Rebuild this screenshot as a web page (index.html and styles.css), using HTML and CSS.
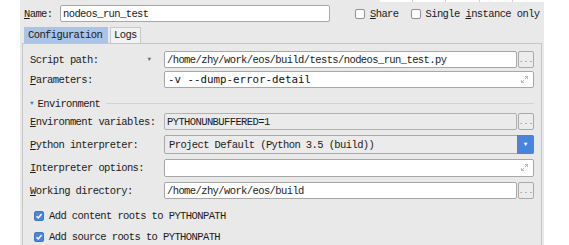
FILE: index.html
```html
<!DOCTYPE html>
<html lang="en">

<head>
	<meta charset="UTF-8">
	<title>Run Configuration</title>
	<link rel="stylesheet" href="styles.css">
</head>

<body>
	<div class="dialog">
		<div class="top-strip">
			<span></span><span></span><span></span><span></span><span></span>
		</div>

		<div class="name-row">
			<label class="name-label"><u>N</u>ame:</label>
			<div class="field name-field">nodeos_run_test</div>
			<label class="check share"><span class="box"></span><span><u>S</u>hare</span></label>
			<label class="check"><span class="box"></span><span>Single <u>i</u>nstance only</span></label>
		</div>

		<div class="tabs">
			<div class="tab active">Configuration</div>
			<div class="tab">Logs</div>
		</div>

		<div class="panel">
			<div class="row row-script">
				<div class="label"><span>Script path:</span><span class="drop">&#9660;</span></div>
				<div class="field">/home/zhy/work/eos/build/tests/nodeos_run_test.py</div>
				<div class="dots">...</div>
			</div>

			<div class="row row-params">
				<div class="label"><span><u>P</u>arameters:</span></div>
				<div class="field wide params">-v --dump-error-detail
					<svg class="expand" width="7" height="7" viewBox="0 0 7 7"><path d="M4 0.5h2.5v2.5M6.5 0.5L4 3M0.5 4v2.5h2.5M0.5 6.5L3 4" fill="none" stroke="#b8b8b8" stroke-width="1"/></svg>
				</div>
			</div>

			<div class="section">
				<span class="tri">&#9660;</span><span>Environment</span><span class="rule"></span>
			</div>

			<div class="row row-env">
				<div class="label"><span><u>E</u>nvironment variables:</span></div>
				<div class="field muted">PYTHONUNBUFFERED=1</div>
				<div class="dots">...</div>
			</div>

			<div class="row row-python">
				<div class="label"><span><u>P</u>ython interpreter:</span></div>
				<div class="field wide combo">Project Default (Python 3.5 (build))
					<span class="combo-btn">&#9660;</span>
				</div>
			</div>

			<div class="row row-options">
				<div class="label"><span><u>I</u>nterpreter options:</span></div>
				<div class="field wide">
					<svg class="expand" width="7" height="7" viewBox="0 0 7 7"><path d="M4 0.5h2.5v2.5M6.5 0.5L4 3M0.5 4v2.5h2.5M0.5 6.5L3 4" fill="none" stroke="#b8b8b8" stroke-width="1"/></svg>
				</div>
			</div>

			<div class="row row-work">
				<div class="label"><span><u>W</u>orking directory:</span></div>
				<div class="field">/home/zhy/work/eos/build</div>
				<div class="dots">...</div>
			</div>

			<label class="check checked first"><span class="box"><svg width="8" height="8" viewBox="0 0 8 8"><path d="M1.5 4.2l1.8 1.8 3.3-4" fill="none" stroke="#fff" stroke-width="1.5"/></svg></span><span>Add content roots to PYTHONPATH</span></label>
			<label class="check checked second"><span class="box"><svg width="8" height="8" viewBox="0 0 8 8"><path d="M1.5 4.2l1.8 1.8 3.3-4" fill="none" stroke="#fff" stroke-width="1.5"/></svg></span><span>Add source roots to PYTHONPATH</span></label>
		</div>
	</div>
</body>

</html>
```

FILE: styles.css
```css
*,
*::before,
*::after {
	box-sizing: border-box;
}

body {
	margin: 0;
	background-color: #ffffff;
	font-family: "Liberation Mono", "DejaVu Sans Mono", monospace;
	font-size: 10.5px;
	letter-spacing: -0.6px;
	color: #1b1b1b;
}

u {
	text-decoration: underline;
	text-underline-offset: 1px;
}

.dialog {
	position: relative;
	margin-left: 20px;
	width: 524px;
	height: 245px;
	background-color: #e9e9e9;
	overflow: hidden;
}

.top-strip {
	position: absolute;
	top: 0;
	left: 360px;
	width: 166px;
	height: 2px;
	display: flex;
	background-color: #ffffff;
}

.top-strip span {
	flex: 1;
	border-right: 1px solid #cfcfcf;
}

.name-row {
	display: flex;
	align-items: center;
	height: 24px;
	padding-top: 3px;
}

.name-label {
	width: 40px;
	flex: none;
	padding-left: 4px;
}

.check {
	display: flex;
	align-items: center;
	gap: 5px;
	white-space: nowrap;
}

.share {
	margin-left: 25px;
	margin-right: 12px;
}

.box {
	width: 10px;
	height: 10px;
	flex: none;
	border: 1px solid #8f8f8f;
	border-radius: 2px;
	background-color: #ffffff;
	display: flex;
	align-items: center;
	justify-content: center;
}

.tabs {
	display: flex;
	gap: 2px;
	margin-top: 3px;
	padding-left: 4px;
	height: 16px;
}

.tab {
	padding: 0 3px;
	line-height: 15px;
	border: 1px solid #c8c8c8;
	border-bottom: none;
	background-color: #f2f2f2;
}

.tab.active {
	width: 84px;
	background-color: #a9c4e6;
	border-color: #a9c4e6;
}

.panel {
	margin-left: 2px;
	width: 520px;
	height: 210px;
	border: 1px solid #c6c6c6;
	padding: 7px 7px 0 7px;
	display: flex;
	flex-direction: column;
}

.row {
	display: flex;
	align-items: stretch;
	height: 17px;
}

.label {
	width: 134px;
	flex: none;
	display: flex;
	align-items: center;
}

.drop {
	margin-left: auto;
	margin-right: 13px;
	font-size: 6px;
	color: #6c6c6c;
	letter-spacing: 0;
}

.field {
	position: relative;
	width: 353px;
	flex: none;
	display: flex;
	align-items: center;
	padding-left: 2px;
	background-color: #ffffff;
	border: 1px solid #a7a7a7;
	border-radius: 2px;
	white-space: nowrap;
}

.field.name-field {
	width: 270px;
	height: 17px;
}

.field.wide {
	width: 370px;
}

.field.muted {
	background-color: #ebebeb;
	border-color: #b0b0b0;
}

.params {
	font-family: "DejaVu Sans Mono", monospace;
	font-size: 10.8px;
	letter-spacing: 0;
	color: #111111;
	padding-left: 3px;
}

.expand {
	position: absolute;
	right: 5px;
	top: 4px;
}

.dots {
	width: 16px;
	margin-left: 1px;
	border: 1px solid #a9a9a9;
	border-radius: 2px;
	background-color: #ececec;
	color: #777777;
	font-size: 8px;
	letter-spacing: 0;
	display: flex;
	align-items: center;
	justify-content: center;
	line-height: 1;
}

.row-params {
	margin-top: 3px;
}

.section {
	display: flex;
	align-items: center;
	height: 19px;
	margin-top: 6px;
}

.tri {
	font-size: 6px;
	color: #3d7bd4;
	letter-spacing: 0;
	margin-right: 4px;
}

.rule {
	flex: 1;
	height: 1px;
	margin-left: 6px;
	background-color: #d3d3d3;
}

.row-python {
	margin-top: 5px;
	height: 19px;
}

.combo {
	background-color: #ebebeb;
	border-color: #a8a8a8;
	padding-left: 4px;
}

.combo-btn {
	position: absolute;
	right: -1px;
	top: -1px;
	width: 17px;
	height: 19px;
	background-color: #4a83dc;
	border-radius: 0 2px 2px 0;
	color: #ffffff;
	font-size: 6px;
	letter-spacing: 0;
	display: flex;
	align-items: center;
	justify-content: center;
}

.row-options {
	margin-top: 5px;
	height: 18px;
}

.row-work {
	margin-top: 5px;
}

.check.checked {
	padding-left: 4px;
	height: 18px;
}

.check.checked .box {
	background-color: #4a86df;
	border-color: #3f76c8;
}

.first {
	margin-top: 8px;
}

.second {
	margin-top: 3px;
}
```
